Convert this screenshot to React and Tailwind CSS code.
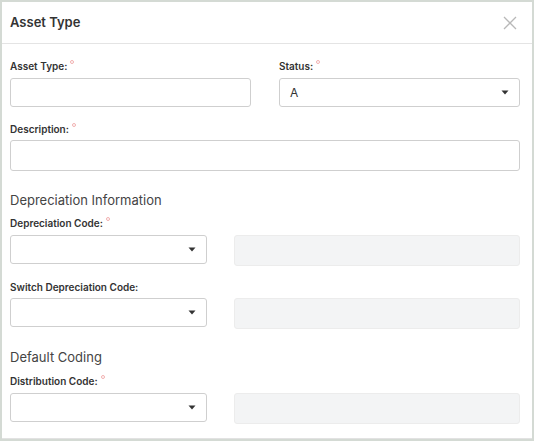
import React from 'react';

const font = { fontFamily: 'Inter, "Noto Sans", sans-serif' };

function Label({ children, required }) {
  return (
    <div className="h-[14px] text-[10px] leading-[14px] font-semibold text-[#333] flex items-start">
      {children}
      {required && <span className="ml-[3px] mt-[1px] w-[4px] h-[4px] rounded-full border border-[#f2b0b0]" />}
    </div>
  );
}

function Caret() {
  return (
    <svg width="8" height="5" viewBox="0 0 8 5" className="shrink-0">
      <path d="M0.5 0.5 L7.5 0.5 L4 4.5 Z" fill="#333" />
    </svg>
  );
}

function Select({ value, className = '' }) {
  return (
    <div className={`h-[29px] border border-[#cfcfcf] rounded-[3px] bg-white flex items-center justify-between pl-[10px] pr-[10px] ${className}`}>
      <span className="text-[12px] text-[#333]">{value}</span>
      <Caret />
    </div>
  );
}

function ReadOnly() {
  return <div className="h-[31px] flex-1 rounded-[3px] bg-[#f3f4f5] border border-[#ececec]" />;
}

function CodeRow({ label, required, gap, inner }) {
  return (
    <div className={gap}>
      <Label required={required}>{label}</Label>
      <div className={`${inner} flex gap-[27px] items-start`}>
        <Select className="w-[197px]" />
        <ReadOnly />
      </div>
    </div>
  );
}

export default function App() {
  return (
    <div style={font} className="w-[534px] h-[441px] bg-[#d4dad4] p-[2px]">
      <div className="h-full bg-white border-b border-[#e2e2e2] flex flex-col">
        <div className="h-[42px] border-b border-[#e4e4e4] flex items-center justify-between pl-[8px] pr-[15px]">
          <h1 className="text-[13px] font-semibold text-[#333]">Asset Type</h1>
          <svg width="14" height="14" viewBox="0 0 14 14">
            <path d="M1 1 L13 13 M13 1 L1 13" stroke="#b8b8b8" strokeWidth="1.3" />
          </svg>
        </div>

        <div className="pl-[8px] pr-[12px] pt-[15px]">
          <div className="flex gap-[28px]">
            <div className="flex-1">
              <Label required>Asset Type:</Label>
              <div className="mt-[5px] h-[29px] border border-[#cfcfcf] rounded-[3px]" />
            </div>
            <div className="flex-1">
              <Label required>Status:</Label>
              <Select value="A" className="mt-[5px]" />
            </div>
          </div>

          <div className="mt-[15px]">
            <Label required>Description:</Label>
            <div className="mt-[4px] h-[31px] border border-[#cfcfcf] rounded-[3px]" />
          </div>

          <h2 className="mt-[20px] text-[13px] leading-[18px] text-[#444]">Depreciation Information</h2>
          <CodeRow label="Depreciation Code:" required gap="mt-[7px]" inner="mt-[5px]" />
          <CodeRow label="Switch Depreciation Code:" gap="mt-[14px]" inner="mt-[4px]" />

          <h2 className="mt-[19px] text-[13px] leading-[18px] text-[#444]">Default Coding</h2>
          <CodeRow label="Distribution Code:" required gap="mt-[8px]" inner="mt-[5px]" />
        </div>
      </div>
    </div>
  );
}
